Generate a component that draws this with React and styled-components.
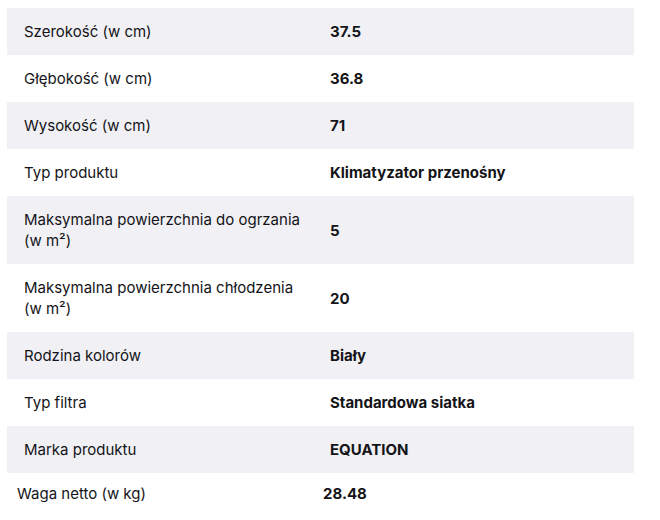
import React from 'react'
import styled, { createGlobalStyle } from 'styled-components'

const GlobalStyle = createGlobalStyle`
  body {
    margin: 0;
    background: #fff;
    font-family: Inter, "Noto Sans", sans-serif;
    color: #141418;
  }
`

const Wrapper = styled.div`
  padding: 8px 0 0 0;
  width: 660px;
`

const Table = styled.div`
  margin-left: 7px;
  width: 627px;
  display: flex;
  flex-direction: column;
`

const Row = styled.div`
  display: grid;
  grid-template-columns: 306px 1fr;
  align-items: center;
  background: ${({ $shaded }) => ($shaded ? '#f0f0f5' : '#fff')};
  padding: 13px 17px;
  font-size: 15px;
  line-height: 21px;
`

const Label = styled.div`
  padding-right: 8px;
`

const Value = styled.div`
  font-weight: 700;
`

const LastRow = styled(Row)`
  width: 627px;
  padding: 10px 17px;
  box-sizing: border-box;
`

const specs = [
  ['Szerokość (w cm)', '37.5'],
  ['Głębokość (w cm)', '36.8'],
  ['Wysokość (w cm)', '71'],
  ['Typ produktu', 'Klimatyzator przenośny'],
  ['Maksymalna powierzchnia do ogrzania (w\u00a0m²)', '5'],
  ['Maksymalna powierzchnia chłodzenia (w\u00a0m²)', '20'],
  ['Rodzina kolorów', 'Biały'],
  ['Typ filtra', 'Standardowa siatka'],
  ['Marka produktu', 'EQUATION'],
]

const App = () => {
  return (
    <Wrapper>
      <GlobalStyle />
      <Table>
        {specs.map(([label, value], i) => (
          <Row key={label} $shaded={i % 2 === 0}>
            <Label>{label}</Label>
            <Value>{value}</Value>
          </Row>
        ))}
      </Table>
      <LastRow>
        <Label>Waga netto (w kg)</Label>
        <Value>28.48</Value>
      </LastRow>
    </Wrapper>
  )
}

export default App
